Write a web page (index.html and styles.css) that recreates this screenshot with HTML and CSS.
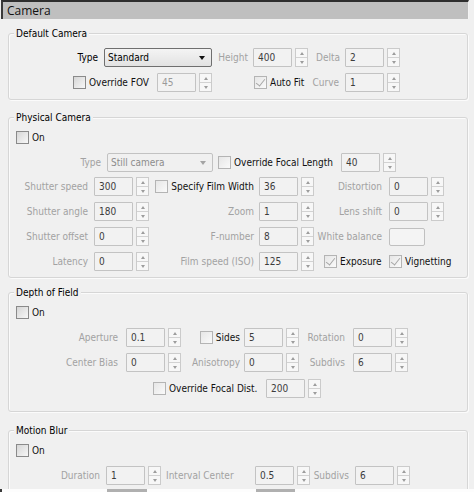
FILE: index.html
```html
<!DOCTYPE html>
<html lang="en">

<head>
    <meta charset="UTF-8">
    <meta name="viewport" content="width=device-width, initial-scale=1.0">
    <title>Camera</title>

    <link rel="stylesheet" href="styles.css">
</head>

<body>
    <div class="panel">
        <div class="rollout-head">Camera</div>

        <!-- Default Camera -->
        <div class="group group-default">
            <h2 class="group-title">Default Camera</h2>
            <div class="row row-first">
                <span class="lbl w89">Type</span>
                <div class="select select-type">Standard</div>
                <span class="lbl off w36">Height</span>
                <div class="field ml5"><span class="num">400</span><span class="spin"><i></i><i></i></span></div>
                <span class="lbl off w32">Delta</span>
                <div class="field ml5"><span class="num">2</span><span class="spin"><i></i><i></i></span></div>
            </div>
            <div class="row row-next">
                <label class="check ml64 w84"><span class="box"></span>Override FOV</label>
                <div class="field"><span class="num dim">45</span><span class="spin"><i></i><i></i></span></div>
                <label class="check ml42 w52"><span class="box box-off checked"></span>Auto Fit</label>
                <span class="lbl off w33">Curve</span>
                <div class="field ml6"><span class="num">1</span><span class="spin"><i></i><i></i></span></div>
            </div>
        </div>

        <!-- Physical Camera -->
        <div class="group group-physical">
            <h2 class="group-title">Physical Camera</h2>
            <label class="check on-row"><span class="box"></span>On</label>
            <div class="row row-type">
                <span class="lbl off w92">Type</span>
                <div class="select select-off">Still camera</div>
                <label class="check ml5 w118"><span class="box box-off"></span>Override Focal Length</label>
                <div class="field ml5"><span class="num">40</span><span class="spin"><i></i><i></i></span></div>
            </div>
            <div class="grid grid-phys">
                <span class="cell off">Shutter speed</span>
                <div class="field"><span class="num">300</span><span class="spin"><i></i><i></i></span></div>
                <label class="cell check"><span class="box box-off"></span>Specify Film Width</label>
                <div class="field"><span class="num">36</span><span class="spin"><i></i><i></i></span></div>
                <span class="cell off">Distortion</span>
                <div class="field"><span class="num">0</span><span class="spin"><i></i><i></i></span></div>

                <span class="cell off">Shutter angle</span>
                <div class="field"><span class="num">180</span><span class="spin"><i></i><i></i></span></div>
                <span class="cell off">Zoom</span>
                <div class="field"><span class="num">1</span><span class="spin"><i></i><i></i></span></div>
                <span class="cell off">Lens shift</span>
                <div class="field"><span class="num">0</span><span class="spin"><i></i><i></i></span></div>

                <span class="cell off">Shutter offset</span>
                <div class="field"><span class="num">0</span><span class="spin"><i></i><i></i></span></div>
                <span class="cell off">F-number</span>
                <div class="field"><span class="num">8</span><span class="spin"><i></i><i></i></span></div>
                <span class="cell off">White balance</span>
                <div class="swatch"></div>

                <span class="cell off">Latency</span>
                <div class="field"><span class="num">0</span><span class="spin"><i></i><i></i></span></div>
                <span class="cell off">Film speed (ISO)</span>
                <div class="field"><span class="num">125</span><span class="spin"><i></i><i></i></span></div>
                <label class="cell check cell-start"><span class="box box-off checked"></span>Exposure</label>
                <label class="check"><span class="box box-off checked"></span>Vignetting</label>
            </div>
        </div>

        <!-- Depth of Field -->
        <div class="group group-dof">
            <h2 class="group-title">Depth of Field</h2>
            <label class="check on-row"><span class="box"></span>On</label>
            <div class="grid grid-dof">
                <span class="cell off">Aperture</span>
                <div class="field"><span class="num">0.1</span><span class="spin"><i></i><i></i></span></div>
                <label class="cell check"><span class="box box-off"></span>Sides</label>
                <div class="field"><span class="num">5</span><span class="spin"><i></i><i></i></span></div>
                <span class="cell off">Rotation</span>
                <div class="field"><span class="num">0</span><span class="spin"><i></i><i></i></span></div>

                <span class="cell off">Center Bias</span>
                <div class="field"><span class="num">0</span><span class="spin"><i></i><i></i></span></div>
                <span class="cell off">Anisotropy</span>
                <div class="field"><span class="num">0</span><span class="spin"><i></i><i></i></span></div>
                <span class="cell off">Subdivs</span>
                <div class="field"><span class="num">6</span><span class="spin"><i></i><i></i></span></div>
            </div>
            <div class="row row-focal">
                <label class="check ml144 w107"><span class="box box-off"></span>Override Focal Dist.</label>
                <div class="field ml6"><span class="num">200</span><span class="spin"><i></i><i></i></span></div>
            </div>
        </div>

        <!-- Motion Blur -->
        <div class="group group-blur">
            <h2 class="group-title">Motion Blur</h2>
            <label class="check on-row"><span class="box"></span>On</label>
            <div class="row row-blur">
                <span class="lbl off w91">Duration</span>
                <div class="field ml6"><span class="num">1</span><span class="spin"><i></i><i></i></span></div>
                <span class="lbl lbl-left off w88">Interval Center</span>
                <div class="field ml6"><span class="num">0.5</span><span class="spin"><i></i><i></i></span></div>
                <span class="lbl off w39">Subdivs</span>
                <div class="field ml6"><span class="num">6</span><span class="spin"><i></i><i></i></span></div>
            </div>
        </div>
    </div>

    <div class="cutoff">
        <span class="cut-block cut-a"></span>
        <span class="cut-block cut-b"></span>
    </div>
</body>

</html>
```

FILE: styles.css
```css
/* common */
* {
    box-sizing: border-box;
}

html,
body,
h2 {
    margin: 0;
    padding: 0;
}

body {
    width: 474px;
    height: 492px;
    overflow: hidden;
    background: #f0f0f0;
    font-family: "DejaVu Sans Condensed", "DejaVu Sans", "Liberation Sans", sans-serif;
    font-size: 10px;
    color: #1a1a1a;
}

.panel {
    height: 489px;
    overflow: hidden;
}

/* rollout header */
.rollout-head {
    height: 19px;
    margin-left: 1px;
    margin-right: 5px;
    padding: 1px 0 0 4px;
    border-top: 2px solid #2e2e2e;
    border-left: 2px solid #3a3a3a;
    border-right: 1px solid #f4f4f4;
    background: #bfbfbf;
    font-family: "Open Sans", "Liberation Sans", sans-serif;
    font-size: 12px;
    line-height: 15px;
    color: #111;
}

/* group boxes */
.group {
    margin: 0 6px 0 8px;
    border: 1px solid #d6d6d6;
    border-radius: 3px;
    box-shadow: inset 1px 1px 0 #fbfbfb, 1px 1px 0 #fbfbfb;
}

.group-title {
    width: max-content;
    height: 13px;
    margin: -7px 0 0 5px;
    padding: 0 2px;
    background: #f0f0f0;
    font-size: 10px;
    font-weight: normal;
    line-height: 13px;
    color: #000;
}

.group-default {
    margin-top: 14px;
    padding-bottom: 7px;
}

.group-physical {
    margin-top: 17px;
    padding-bottom: 6px;
}

.group-dof {
    margin-top: 14px;
    padding-bottom: 13px;
}

.group-blur {
    margin-top: 18px;
    height: 80px;
}

/* rows */
.row {
    display: flex;
    align-items: center;
    height: 19px;
}

.row-first {
    margin-top: 8px;
}

.row-next {
    margin-top: 6px;
}

.row-type {
    margin-top: 9px;
}

.row-focal {
    margin-top: 7px;
}

.row-blur {
    margin-top: 9px;
}

.on-row {
    height: 14px;
    margin: 6px 0 0 7px;
}

.lbl {
    flex: none;
    text-align: right;
    white-space: nowrap;
    color: #000;
}

.lbl-left {
    padding-left: 5px;
    text-align: left;
}

.off {
    color: #a2a2a2;
}

.w32 { width: 32px; }
.w33 { width: 33px; }
.w36 { width: 36px; }
.w39 { width: 39px; }
.w52 { width: 52px; }
.w84 { width: 84px; }
.w88 { width: 88px; }
.w89 { width: 89px; }
.w91 { width: 91px; }
.w92 { width: 92px; }
.w107 { width: 107px; }
.w118 { width: 118px; }

.ml5 { margin-left: 5px; }
.ml6 { margin-left: 6px; }
.ml42 { margin-left: 42px; }
.ml64 { margin-left: 64px; }
.ml144 { margin-left: 144px; }

/* checkbox */
.check {
    display: flex;
    flex: none;
    align-items: center;
    white-space: nowrap;
    color: #111;
}

.box {
    display: flex;
    flex: none;
    align-items: center;
    justify-content: center;
    width: 13px;
    height: 13px;
    margin-right: 3px;
    border: 1px solid #8a8a8a;
    background: linear-gradient(135deg, #d6d6d6, #f7f7f7);
}

.box-off {
    border-color: #b4b4b4;
    background: linear-gradient(135deg, #e6e6e6, #fafafa);
}

.box.checked::before {
    content: "";
    width: 4px;
    height: 8px;
    margin-top: -2px;
    border: solid #a6a6a6;
    border-width: 0 1px 1px 0;
    transform: rotate(38deg);
}

/* dropdown */
.select {
    display: flex;
    flex: none;
    align-items: center;
    justify-content: space-between;
    height: 19px;
    margin-left: 6px;
    padding: 0 6px 0 3px;
    border: 1px solid #6f6f6f;
    border-radius: 2px;
    background: linear-gradient(#f4f4f4, #e2e2e2);
    color: #000;
}

.select::after {
    content: "";
    border-left: 3.5px solid transparent;
    border-right: 3.5px solid transparent;
    border-top: 4px solid #111;
}

.select-type {
    width: 108px;
}

.select-off {
    width: 106px;
    border-color: #c2c2c2;
    background: #f0f0f0;
    color: #8c8c8c;
}

.select-off::after {
    border-top-color: #a4a4a4;
}

/* spinner field */
.field {
    display: flex;
    flex: none;
    width: 55px;
    height: 19px;
}

.num {
    width: 39px;
    height: 19px;
    padding-left: 4px;
    border: 1px solid #c3c3c3;
    border-radius: 1px;
    background: #f2f2f2;
    line-height: 17px;
    color: #3c3c3c;
}

.num.dim {
    color: #9a9a9a;
}

.spin {
    display: flex;
    flex-direction: column;
    width: 13px;
    height: 19px;
    margin-left: 3px;
    border: 1px solid #cbcbcb;
    background: #f7f7f7;
}

.spin i {
    display: flex;
    flex: 1;
    align-items: center;
    justify-content: center;
}

.spin i + i {
    border-top: 1px solid #d2d2d2;
}

.spin i:first-child::before {
    content: "";
    border-left: 2.5px solid transparent;
    border-right: 2.5px solid transparent;
    border-bottom: 3px solid #9c9c9c;
}

.spin i + i::before {
    content: "";
    border-left: 2.5px solid transparent;
    border-right: 2.5px solid transparent;
    border-top: 3px solid #9c9c9c;
}

.swatch {
    width: 36px;
    height: 18px;
    border: 1px solid #c0c0c0;
    border-radius: 2px;
    background: #f4f4f4;
}

/* grids */
.grid {
    display: grid;
    grid-auto-rows: 19px;
    row-gap: 6px;
    align-items: center;
}

.cell {
    display: flex;
    justify-content: flex-end;
    align-items: center;
    white-space: nowrap;
}

.grid-phys {
    margin-top: 5px;
    grid-template-columns: 85px 55px 110px 55px 75px 55px;
}

.grid-phys > :nth-child(6n+1) {
    padding-right: 6px;
}

.grid-phys > :nth-child(6n+3) {
    padding-right: 5px;
}

.grid-phys > :nth-child(6n+5) {
    padding-right: 7px;
}

.grid-phys .cell-start {
    justify-content: flex-start;
    padding-left: 10px;
}

.grid-dof {
    margin-top: 9px;
    grid-template-columns: 117px 55px 63px 55px 54px 55px;
}

.grid-dof > :nth-child(6n+1) {
    padding-right: 8px;
}

.grid-dof > :nth-child(6n+3) {
    padding-right: 4px;
}

.grid-dof > :nth-child(6n+5) {
    padding-right: 8px;
}

/* bottom cut-off of the next rollout */
.cutoff {
    display: flex;
    height: 3px;
    background: #fdfdfd;
    border-left: 2px solid #3a3a3a;
}

.cut-block {
    height: 3px;
    background: #b0b0b0;
}

.cut-a {
    width: 40px;
    margin-left: 105px;
}

.cut-b {
    width: 39px;
    margin-left: 109px;
}
```
